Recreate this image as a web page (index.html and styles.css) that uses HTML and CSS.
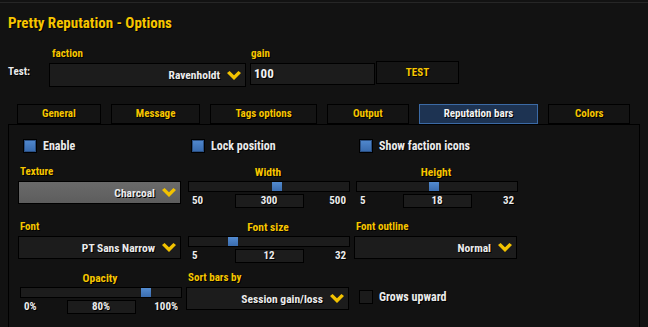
FILE: index.html
```html
<!DOCTYPE html>
<html lang="en">
<head>
<meta charset="utf-8">
<title>Pretty Reputation - Options</title>
<link rel="stylesheet" href="styles.css">
</head>
<body>
<div class="window">
  <h1 class="title">Pretty Reputation - Options</h1>

  <div class="test-row">
    <span class="test-label">Test:</span>
    <div class="field faction-field">
      <span class="field-label">faction</span>
      <div class="dropdown dropdown-tall">
        <span class="dropdown-text">Ravenholdt</span>
        <svg class="chev" viewBox="0 0 14 9"><polygon points="0,2 2.6,0 7,4.2 11.4,0 14,2 7,9"/></svg>
      </div>
    </div>
    <div class="field gain-field">
      <span class="field-label field-label-tight">gain</span>
      <div class="input">100</div>
    </div>
    <button class="btn">TEST</button>
  </div>

  <div class="tabs">
    <div class="tab">General</div>
    <div class="tab">Message</div>
    <div class="tab">Tags options</div>
    <div class="tab">Output</div>
    <div class="tab tab-active">Reputation bars</div>
    <div class="tab">Colors</div>
  </div>

  <div class="panel">
    <div class="grid">
      <!-- row 1 -->
      <label class="check"><span class="box box-on"></span>Enable</label>
      <label class="check"><span class="box box-on"></span>Lock position</label>
      <label class="check"><span class="box box-on"></span>Show faction icons</label>

      <!-- row 2 -->
      <div class="cell">
        <span class="cell-label">Texture</span>
        <div class="dropdown dropdown-texture">
          <span class="dropdown-text">Charcoal</span>
          <svg class="chev" viewBox="0 0 14 9"><polygon points="0,2 2.6,0 7,4.2 11.4,0 14,2 7,9"/></svg>
        </div>
      </div>
      <div class="cell">
        <span class="slider-label">Width</span>
        <div class="track"><span class="thumb" style="--pos:0.556"></span></div>
        <div class="slider-foot"><span class="min">50</span><span class="value">300</span><span class="max">500</span></div>
      </div>
      <div class="cell">
        <span class="slider-label">Height</span>
        <div class="track"><span class="thumb" style="--pos:0.481"></span></div>
        <div class="slider-foot"><span class="min">5</span><span class="value">18</span><span class="max">32</span></div>
      </div>

      <!-- row 3 -->
      <div class="cell">
        <span class="cell-label">Font</span>
        <div class="dropdown">
          <span class="dropdown-text">PT Sans Narrow</span>
          <svg class="chev" viewBox="0 0 14 9"><polygon points="0,2 2.6,0 7,4.2 11.4,0 14,2 7,9"/></svg>
        </div>
      </div>
      <div class="cell">
        <span class="slider-label">Font size</span>
        <div class="track"><span class="thumb" style="--pos:0.259"></span></div>
        <div class="slider-foot"><span class="min">5</span><span class="value">12</span><span class="max">32</span></div>
      </div>
      <div class="cell">
        <span class="cell-label">Font outline</span>
        <div class="dropdown">
          <span class="dropdown-text">Normal</span>
          <svg class="chev" viewBox="0 0 14 9"><polygon points="0,2 2.6,0 7,4.2 11.4,0 14,2 7,9"/></svg>
        </div>
      </div>

      <!-- row 4 -->
      <div class="cell">
        <span class="slider-label">Opacity</span>
        <div class="track"><span class="thumb" style="--pos:0.8"></span></div>
        <div class="slider-foot"><span class="min">0%</span><span class="value">80%</span><span class="max">100%</span></div>
      </div>
      <div class="cell">
        <span class="cell-label">Sort bars by</span>
        <div class="dropdown">
          <span class="dropdown-text">Session gain/loss</span>
          <svg class="chev" viewBox="0 0 14 9"><polygon points="0,2 2.6,0 7,4.2 11.4,0 14,2 7,9"/></svg>
        </div>
      </div>
      <div class="cell cell-check">
        <label class="check"><span class="box"></span>Grows upward</label>
      </div>
    </div>
  </div>
</div>
</body>
</html>
```

FILE: styles.css
```css
* { box-sizing: border-box; }

html, body {
  margin: 0;
  height: 100%;
}

body {
  background: #121212;
  color: #ebebeb;
  font-family: Roboto, "Open Sans", "Liberation Sans", sans-serif;
  font-stretch: 75%;
  font-weight: bold;
  text-shadow: 1px 1px 0 #000;
  overflow: hidden;
}

.window {
  margin-top: 2px;
  border-top: 1px solid #262626;
  padding: 0 8px;
}

.title {
  margin: 11px 0 0;
  font-size: 15px;
  line-height: 18px;
  color: #f6c500;
  font-weight: bold;
}

/* test row */
.test-row {
  display: flex;
  align-items: flex-start;
  margin-top: 15px;
}

.test-label {
  width: 41px;
  margin-top: 18px;
  font-size: 11px;
  line-height: 14px;
}

.field {
  display: flex;
  flex-direction: column;
}

.field-label {
  height: 14px;
  margin-bottom: 2px;
  padding-left: 3px;
  font-size: 11px;
  line-height: 14px;
  color: #f6c500;
}

.field-label-tight { padding-left: 1px; }

.faction-field { width: 197px; }

.gain-field {
  width: 125px;
  margin-left: 4px;
}

.input {
  height: 22px;
  padding-left: 3px;
  border: 1px solid #000;
  background: #1c1c1c;
  font-size: 13px;
  line-height: 20px;
  color: #f2f2f2;
}

.btn {
  width: 83px;
  height: 23px;
  margin: 14px 0 0 1px;
  padding: 0;
  border: 1px solid #000;
  background: #151515;
  color: #f6c500;
  font: inherit;
  font-size: 11px;
  text-shadow: 1px 1px 0 #000;
}

/* dropdown */
.dropdown {
  display: flex;
  align-items: center;
  justify-content: flex-end;
  width: 163px;
  height: 23px;
  padding-right: 4px;
  border: 1px solid #000;
  background: #1c1c1c;
  font-size: 11.5px;
}

.dropdown-tall {
  width: 100%;
  height: 24px;
}

.dropdown-texture {
  background: linear-gradient(180deg, #6a6a6a, #5d5d5d);
}

.dropdown-text { margin-right: 7px; }

.chev {
  width: 14px;
  height: 9px;
  fill: #f2c200;
}

/* tabs */
.tabs {
  display: flex;
  gap: 10px;
  margin-top: 17px;
  padding-left: 9px;
}

.tab {
  min-width: 82px;
  height: 20px;
  padding: 0 24px;
  border: 1px solid #000;
  background: #141414;
  color: #f6c500;
  font-size: 11px;
  line-height: 18px;
  text-align: center;
  white-space: nowrap;
}

.tab-active {
  background: #1d3352;
  border-color: #3b6aa5;
  color: #f2f2f2;
}

/* panel */
.panel {
  height: 203px;
  padding: 14px 0 0 9px;
  border: 1px solid #000;
  border-bottom: 0;
  background: #121212;
}

.grid {
  display: grid;
  grid-template-columns: repeat(3, 164px);
  grid-template-rows: 26px 55px 51px auto;
  column-gap: 4px;
}

.check {
  display: flex;
  align-items: center;
  gap: 6px;
  height: 14px;
  padding-left: 5px;
  font-size: 12px;
  white-space: nowrap;
}

.box {
  flex: none;
  width: 14px;
  height: 14px;
  border: 1px solid #000;
  background: #1b1b1b;
}

.box-on {
  background: linear-gradient(180deg, #5189cf, #3769ac);
  box-shadow: inset 0 0 0 1px #2a4f82;
}

.cell {
  display: flex;
  flex-direction: column;
}

.cell-check { padding-top: 19px; }

.cell-label {
  height: 14px;
  margin-bottom: 2px;
  padding-left: 2px;
  font-size: 11px;
  line-height: 14px;
  color: #f6c500;
}

.slider-label {
  height: 14px;
  margin-bottom: 2px;
  text-align: center;
  font-size: 11.5px;
  line-height: 14px;
  color: #f6c500;
}

.track {
  position: relative;
  height: 11px;
  margin-left: 2px;
  border: 1px solid #000;
  background: #1c1c1c;
}

.thumb {
  position: absolute;
  top: 0;
  left: calc(var(--pos) * (100% - 10px));
  width: 10px;
  height: 9px;
  background: linear-gradient(180deg, #538bd0, #3a6cae);
}

.slider-foot {
  display: grid;
  grid-template-columns: 1fr 69px 1fr;
  margin: 2px 0 0 2px;
  padding: 0 4px;
  font-size: 11px;
  line-height: 13px;
}

.min { justify-self: start; }
.max { justify-self: end; }

.value {
  height: 14px;
  border: 1px solid #000;
  background: #1c1c1c;
  text-align: center;
  line-height: 12px;
}
```
